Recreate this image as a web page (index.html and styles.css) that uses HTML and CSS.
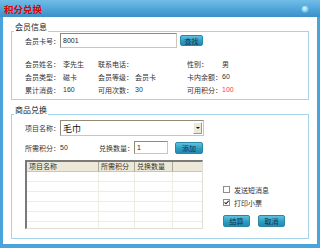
FILE: index.html
```html
<!DOCTYPE html>
<html lang="zh-CN">
<head>
    <meta charset="UTF-8">
    <title>积分兑换</title>
    <link rel="stylesheet" href="styles.css">
</head>
<body>
    <div class="window">
        <div class="titlebar">
            <span class="title">积分兑换</span>
            <span class="close"></span>
        </div>

        <div class="content">
            <!-- 会员信息 -->
            <fieldset class="group">
                <legend>会员信息</legend>
                <div class="group-body">
                    <div class="card-row">
                        <span class="label">会员卡号：</span>
                        <input class="text-input card-input" type="text" value="8001">
                        <button class="btn btn-find">查找</button>
                    </div>
                    <div class="info-grid">
                        <span>会员姓名：</span><span>李先生</span>
                        <span>联系电话：</span><span></span>
                        <span>性别：</span><span>男</span>

                        <span>会员类型：</span><span>磁卡</span>
                        <span>会员等级：</span><span>会员卡</span>
                        <span>卡内余额：</span><span>60</span>

                        <span>累计消费：</span><span>160</span>
                        <span>可用次数：</span><span>30</span>
                        <span>可用积分：</span><span class="points">100</span>
                    </div>
                </div>
            </fieldset>

            <!-- 商品兑换 -->
            <fieldset class="group group-goods">
                <legend>商品兑换</legend>
                <div class="group-body goods-body">
                    <div class="goods-main">
                        <div class="select-row">
                            <span class="label">项目名称：</span>
                            <div class="select">
                                <span class="select-value">毛巾</span>
                                <span class="select-arrow"></span>
                            </div>
                        </div>
                        <div class="qty-row">
                            <span class="label">所需积分：</span>
                            <span class="need">50</span>
                            <span class="label">兑换数量：</span>
                            <input class="text-input qty-input" type="text" value="1">
                            <button class="btn btn-add">添加</button>
                        </div>
                        <table class="grid">
                            <thead>
                                <tr>
                                    <th class="c1">项目名称</th>
                                    <th class="c2">所需积分</th>
                                    <th class="c3">兑换数量</th>
                                    <th class="c4"></th>
                                </tr>
                            </thead>
                            <tbody>
                                <tr><td></td><td></td><td></td><td></td></tr>
                                <tr><td></td><td></td><td></td><td></td></tr>
                                <tr><td></td><td></td><td></td><td></td></tr>
                                <tr><td></td><td></td><td></td><td></td></tr>
                                <tr><td></td><td></td><td></td><td></td></tr>
                                <tr class="last"><td></td><td></td><td></td><td></td></tr>
                            </tbody>
                        </table>
                    </div>

                    <div class="goods-side">
                        <div class="check-row">
                            <span class="check"></span>
                            <span>发送短消息</span>
                        </div>
                        <div class="check-row">
                            <span class="check">
                                <svg width="5" height="5" viewBox="0 0 5 5"><path d="M0.5 2.3 L2 3.8 L4.6 0.8" fill="none" stroke="#222" stroke-width="1.1"/></svg>
                            </span>
                            <span>打印小票</span>
                        </div>
                        <div class="actions">
                            <button class="btn btn-action">结算</button>
                            <button class="btn btn-action">取消</button>
                        </div>
                    </div>
                </div>
            </fieldset>
        </div>
    </div>
</body>
</html>
```

FILE: styles.css
```css
* {
    margin: 0;
    padding: 0;
    box-sizing: border-box;
}

body {
    font-family: 'Liberation Sans', 'Noto Sans CJK SC', sans-serif;
    font-size: 7px;
    color: #333;
    background: #fff;
    white-space: nowrap;
}

.window {
    width: 320px;
    height: 248px;
    border: 3px solid #4aa3db;
    border-top: none;
    border-bottom-width: 4px;
    background: #fff;
}

/* 标题栏 */
.titlebar {
    height: 17px;
    margin: 0 -3px;
    padding: 0 11px 0 4px;
    display: flex;
    align-items: center;
    justify-content: space-between;
    background: linear-gradient(#72bde6, #4ea5d8 55%, #3c90c8);
}

.title {
    color: #e60000;
    font-size: 9.5px;
    font-weight: bold;
}

.close {
    width: 8px;
    height: 8px;
    border-radius: 50%;
    background: radial-gradient(circle at 40% 35%, #d8f4fd, #8fd6f2 60%, #6cc2e6);
    border: 1px solid #5fb6de;
}

.content {
    padding: 6px 8px 5px;
}

/* 分组框 */
.group {
    border: 1px solid #a6d3ec;
    padding: 0 0 3px;
    min-width: 0;
}

.group legend {
    margin-left: 2px;
    padding: 0 1px 6px;
    font-size: 8px;
    line-height: 10px;
    color: #222;
}

.group-goods {
    margin-top: 6px;
    padding-bottom: 9px;
}

.group-body {
    padding-left: 13px;
}

.label {
    width: 35px;
    flex-shrink: 0;
}

.card-row {
    margin-top: -6px;
    height: 15px;
    display: flex;
    align-items: center;
}

.text-input {
    font: inherit;
    color: #222;
    background: #fff;
    border: 1px solid #c9c7ba;
    border-top-color: #8e8b78;
    border-left-color: #8e8b78;
    outline: none;
    padding: 0 2px;
}

.card-input {
    width: 117px;
    height: 15px;
}

.btn {
    font: inherit;
    color: #14324a;
    border: 1px solid #2b87a8;
    border-radius: 2px;
    background: linear-gradient(#5cc3e0, #2f9cc2 55%, #2389b0);
    cursor: pointer;
}

.btn-find {
    margin-left: 3px;
    width: 23px;
    height: 11px;
}

.info-grid {
    margin-top: 9px;
    display: grid;
    grid-template-columns: 38px 35px 37px 52px 35px auto;
    grid-auto-rows: 13px;
    align-items: center;
}

.points {
    color: #ff3b3b;
}

/* 商品兑换 */
.goods-body {
    display: flex;
}

.goods-main {
    width: 179px;
}

.select-row {
    margin-top: -2px;
    height: 16px;
    display: flex;
    align-items: center;
}

.select {
    width: 144px;
    height: 16px;
    display: flex;
    align-items: center;
    justify-content: space-between;
    border: 1px solid #c9c7ba;
    border-top-color: #8e8b78;
    border-left-color: #8e8b78;
    padding: 0 1px 0 2px;
}

.select-value {
    font-size: 9px;
    color: #111;
}

.select-arrow {
    width: 9px;
    height: 12px;
    background: #ece9d8;
    border: 1px solid #fff;
    border-right-color: #999;
    border-bottom-color: #999;
    position: relative;
}

.select-arrow::after {
    content: '';
    position: absolute;
    left: 2px;
    top: 4px;
    border: 2px solid transparent;
    border-top: 2px solid #111;
}

.qty-row {
    margin-top: 5px;
    height: 13px;
    display: flex;
    align-items: center;
}

.need {
    width: 39px;
}

.qty-input {
    width: 34px;
    height: 13px;
}

.btn-add {
    margin-left: 7px;
    width: 28px;
    height: 12px;
}

.grid {
    margin-top: 6px;
    width: 178px;
    border-collapse: separate;
    border-spacing: 0;
    border: 1px solid #e2e0d6;
    border-top: 2px solid #7a7a7a;
    border-left: 2px solid #7a7a7a;
    table-layout: fixed;
}

.grid th {
    height: 10px;
    font-weight: normal;
    text-align: left;
    padding: 0 0 0 2px;
    background: #ece9d8;
    border-right: 1px solid #aca899;
    border-bottom: 1px solid #cbc7b8;
    line-height: 9px;
    overflow: hidden;
}

.grid .c1 { width: 72px; }
.grid .c2 { width: 36px; }
.grid .c3 { width: 38px; }
.grid .c4 { border-right: none; }

.grid td {
    height: 10px;
    border-right: 1px solid #eeece4;
    border-bottom: 1px solid #eeece4;
}

.grid td:last-child {
    border-right: none;
}

.grid tr.last td {
    height: 6px;
    border-bottom: none;
}

.goods-side {
    margin-left: 19px;
    padding-bottom: 2px;
    display: flex;
    flex-direction: column;
    justify-content: flex-end;
}

.check-row {
    height: 13px;
    display: flex;
    align-items: center;
    gap: 4px;
}

.check {
    width: 7px;
    height: 7px;
    border: 1px solid #8d8d8d;
    background: #fff;
    display: flex;
    align-items: center;
    justify-content: center;
}

.actions {
    margin-top: 6px;
    display: flex;
    gap: 8px;
}

.btn-action {
    width: 27px;
    height: 12px;
}
```
